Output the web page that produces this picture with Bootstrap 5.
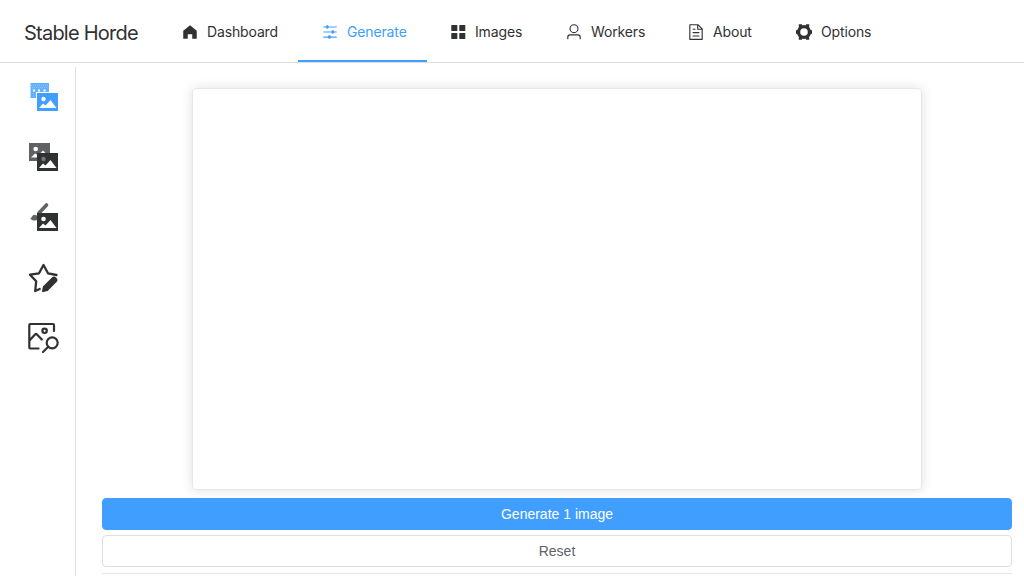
<!DOCTYPE html>
<html lang="en">
<head>
<meta charset="utf-8">
<meta name="viewport" content="width=device-width, initial-scale=1">
<title>Stable Horde</title>
<link href="https://cdn.jsdelivr.net/npm/bootstrap@5.3.0/dist/css/bootstrap.min.css" rel="stylesheet">
<style>
  body { font-family: Inter, "Liberation Sans", sans-serif; font-size: 14px; color: #303133; height: 100vh; overflow: hidden; }
  .top-menu { height: 63px; border-bottom: 1px solid #dcdfe6; padding-left: 24px; }
  .brand { width: 134px; font-size: 20px; letter-spacing: -.77px; padding-top: 4px; color: #303133; white-space: nowrap; }
  .top-menu .nav-link { height: 62px; padding: 3px 20px 0; color: #303133; border-bottom: 2px solid transparent; gap: 5px; letter-spacing: -.14px; white-space: nowrap; }
  .top-menu .nav-link.active { color: #409eff; border-color: #409eff; }
  .top-menu svg { width: 18px; height: 18px; margin: 0 3px; fill: currentColor; flex: none; }
  .w-dash { width: 140px; } .w-gen { width: 129px; } .w-img { width: 115px; }
  .w-work { width: 122px; } .w-about { width: 108px; } .w-opt { width: 119px; }
  .w-img svg { margin: 0 3px 0 2px; }
  .side { width: 76px; margin-top: 4px; border-right: 1px solid #dcdfe6; padding-left: 28px; }
  .side a { height: 60px; color: #303133; }
  .side a.active { color: #409eff; }
  .side svg { width: 32px; height: 32px; display: block; }
  .workspace { padding: 25px 12px 0 26px; }
  .preview { width: 730px; height: 402px; border: 1px solid #e4e7ed; border-radius: 4px; box-shadow: 0 0 12px rgba(0,0,0,.12); }
  .action { height: 32px; font: 14px "Liberation Sans", Arial, sans-serif; border-radius: 4px; padding: 0; }
  .action-main, .action-main:hover { background: #409eff; color: #fff; border-color: #409eff; }
  .action-plain { background: #fff; color: #606266; border-color: #dcdfe6; margin-top: 5px; }
  .panel-edge { margin-top: 6px; border-top: 1px solid #e4e7ed; }
</style>
</head>
<body class="d-flex flex-column bg-white">
<header class="top-menu d-flex align-items-center flex-shrink-0">
  <div class="brand">Stable Horde</div>
  <nav class="nav flex-nowrap align-self-start">
    <a class="nav-link d-flex align-items-center w-dash" href="#"><svg viewBox="0 0 1024 1024"><path d="M512 128 128 447.936V896h255.936V640H640v256h255.936V447.936z"/></svg><span>Dashboard</span></a>
    <a class="nav-link active d-flex align-items-center w-gen" href="#"><svg viewBox="0 0 1024 1024"><path d="M389.44 768a96.064 96.064 0 0 1 181.12 0H896v64H570.56a96.064 96.064 0 0 1-181.12 0H128v-64h261.44zm192-288a96.064 96.064 0 0 1 181.12 0H896v64H762.56a96.064 96.064 0 0 1-181.12 0H128v-64h453.44zm-320-288a96.064 96.064 0 0 1 181.12 0H896v64H442.56a96.064 96.064 0 0 1-181.12 0H128v-64h133.44z"/></svg><span>Generate</span></a>
    <a class="nav-link d-flex align-items-center w-img" href="#"><svg viewBox="0 0 18 18"><rect x="2.300" y="2" width="6" height="6" rx=".6"/><rect x="10.300" y="2" width="6" height="6" rx=".6"/><rect x="2.300" y="10" width="6" height="6" rx=".6"/><rect x="10.300" y="10" width="6" height="6" rx=".6"/></svg><span>Images</span></a>
    <a class="nav-link d-flex align-items-center w-work" href="#"><svg viewBox="0 0 1024 1024"><path d="M512 512a192 192 0 1 0 0-384 192 192 0 0 0 0 384zm0 64a256 256 0 1 1 0-512 256 256 0 0 1 0 512zm320 320v-96a96 96 0 0 0-96-96H288a96 96 0 0 0-96 96v96a32 32 0 1 1-64 0v-96a160 160 0 0 1 160-160h448a160 160 0 0 1 160 160v96a32 32 0 1 1-64 0z"/></svg><span>Workers</span></a>
    <a class="nav-link d-flex align-items-center w-about" href="#"><svg viewBox="0 0 1024 1024"><path d="M832 384H576V128H192v768h640V384zm-26.496-64L640 154.496V320h165.504zM160 64h480l256 256v608a32 32 0 0 1-32 32H160a32 32 0 0 1-32-32V96a32 32 0 0 1 32-32zm160 448h384v64H320v-64zm0-192h160v64H320v-64zm0 384h384v64H320v-64z"/></svg><span>About</span></a>
    <a class="nav-link d-flex align-items-center w-opt" href="#"><svg viewBox="0 0 18 18"><circle cx="9" cy="9" r="5.400" fill="none" stroke="currentColor" stroke-width="3.200"/><path d="M3.800 1.300h3.200v3l-3.200 2zM11 1.300h3.200v5l-3.200-2zM1 7.200l3-.8v5.200l-3-.8zM17 7.200l-3-.8v5.200l3-.8zM3.800 16.700h3.200v-3l-3.200-2zM11 16.700h3.200v-5l-3.200 2z"/></svg><span>Options</span></a>
  </nav>
</header>
<div class="d-flex flex-grow-1">
  <aside class="side flex-shrink-0">
    <a class="active d-flex align-items-center" href="#" aria-label="Text to image"><svg viewBox="0 0 32 32"><path fill="currentColor" opacity=".8" d="M2.500 2H21v9H8v6H2.500z"/><path d="M5 9.500h2M10 9.500h2M15.500 9.500h2" stroke="#fff" stroke-width="1.800"/><path d="M3 4.500h17M4 6.500h16" stroke="#fff" stroke-width=".6" stroke-dasharray="1 1" opacity=".4"/><path fill="currentColor" d="M9 12h21v18H9z"/><circle cx="15.500" cy="18" r="2.200" fill="#fff"/><path fill="#fff" d="m11 27 4-4.500 2.500 2 5-5.500 6 8z"/></svg></a>
    <a class="d-flex align-items-center" href="#" aria-label="Image to image"><svg viewBox="0 0 32 32"><path fill="#606162" d="M1 2h21v10H9v8H1z"/><circle cx="7.700" cy="8" r="2.300" fill="#fff"/><path fill="#fff" d="m3 16.500 4-4 2 1v3zM12.500 12l2.500-2.500 2.500 2.500z"/><path fill="currentColor" d="M9 12h21v18H9z"/><circle cx="15.500" cy="18" r="2.200" fill="#777"/><path fill="#fff" d="m11 27 4-4.500 2.500 2 5-5.500 6 8z"/></svg></a>
    <a class="d-flex align-items-center" href="#" aria-label="Inpainting"><svg viewBox="0 0 32 32"><path d="m11 12 7.500-8" stroke="#606162" stroke-width="3.600" stroke-linecap="round"/><path fill="#606162" d="M2 17.500c2 0 1.500-3.800 5-3.800l3 1.300v3.500c-2.500 2-6 1-8-1z"/><path fill="currentColor" d="M9 12h21v18H9z"/><circle cx="15.500" cy="18" r="2.300" fill="#fff"/><path fill="#fff" d="m11 27 4-4.500 2.500 2 5-5.500 6 8z"/></svg></a>
    <a class="d-flex align-items-center" href="#" aria-label="Rate images"><svg viewBox="0 0 32 32" fill="none" stroke="currentColor" stroke-width="2.300" stroke-linejoin="round" stroke-linecap="round"><path d="M28.500 14 20 12.300l-4.500-8.300L11 12.300l-9 1.400 6.200 6.600L7.200 30l4.500-2"/><path d="m18.500 26.500 7.500-7.500" stroke-width="6.600"/><path d="m15.200 30 .8-4 3 3z" fill="currentColor"/></svg></a>
    <a class="d-flex align-items-center" href="#" aria-label="Interrogate image"><svg viewBox="0 0 32 32" fill="none" stroke="currentColor" stroke-width="2.200" stroke-linejoin="round" stroke-linecap="round"><path d="M10.500 27.500H2.300Q1.300 27.500 1.300 26.500V4Q1.300 3 2.300 3h22.700Q26 3 26 4V10M1.500 19.500l5.500-6q1-1 2 0l4.800 5"/><circle cx="16.600" cy="9.800" r="2.200"/><circle cx="24.200" cy="21.800" r="5.500"/><path d="m20 26-5 5"/></svg></a>
  </aside>
  <main class="workspace flex-grow-1 d-flex flex-column">
    <div class="preview mx-auto flex-shrink-0"></div>
    <button class="btn action action-main w-100 mt-2 flex-shrink-0">Generate 1 image</button>
    <button class="btn action action-plain w-100 flex-shrink-0">Reset</button>
    <div class="panel-edge"></div>
  </main>
</div>
<script src="https://cdn.jsdelivr.net/npm/bootstrap@5.3.0/dist/js/bootstrap.bundle.min.js"></script>
</body>
</html>
